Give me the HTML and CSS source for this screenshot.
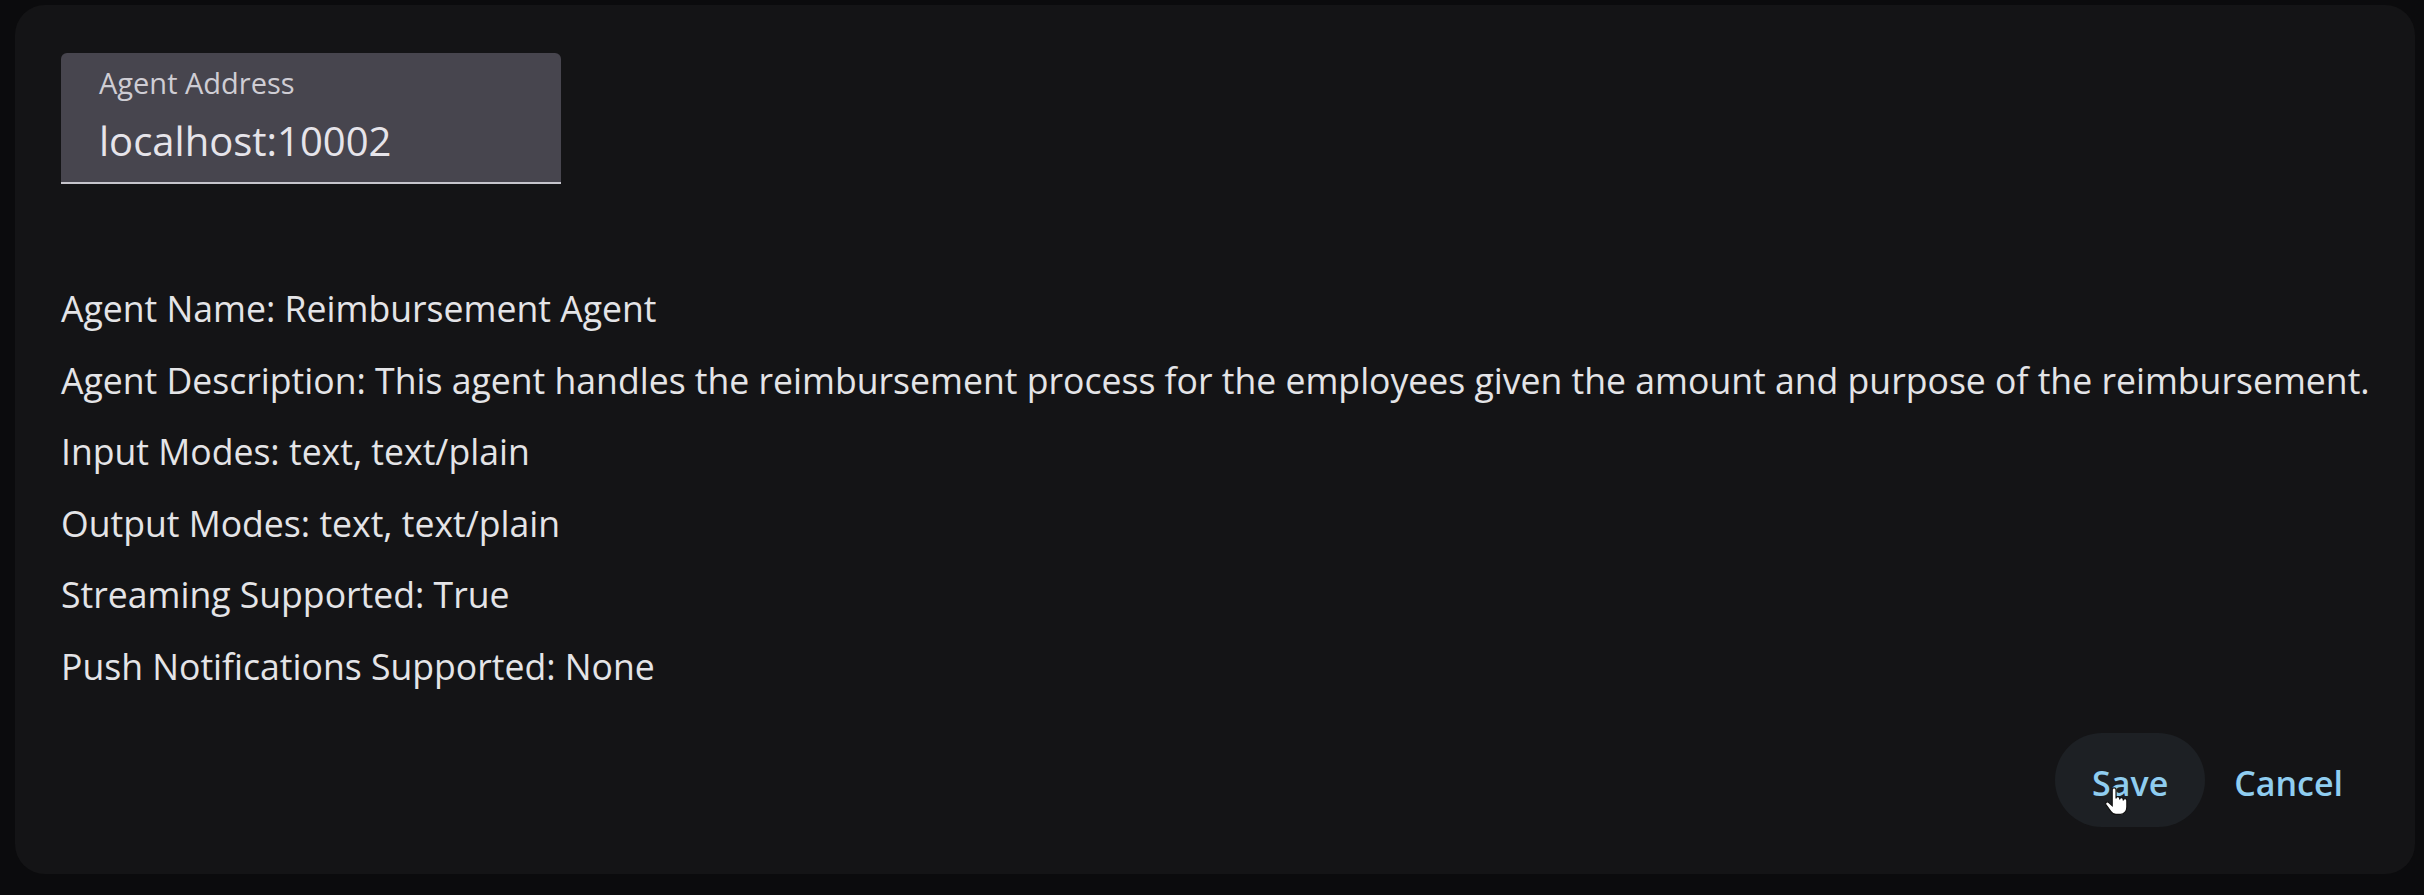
FILE: index.html
```html
<!DOCTYPE html>
<html lang="en">
<head>
<meta charset="utf-8">
<title>Agent</title>
<link rel="stylesheet" href="styles.css">
</head>
<body>
<div class="panel">
  <div class="field">
    <label class="field-label">Agent Address</label>
    <div class="field-value">localhost:10002</div>
  </div>
  <div class="info">
    <p>Agent Name: Reimbursement Agent</p>
    <p>Agent Description: This agent handles the reimbursement process for the employees given the amount and purpose of the reimbursement.</p>
    <p>Input Modes: text, text/plain</p>
    <p>Output Modes: text, text/plain</p>
    <p>Streaming Supported: True</p>
    <p>Push Notifications Supported: None</p>
  </div>
  <div class="actions">
    <button class="btn btn-hover">Save
      <svg class="cursor" viewBox="0 0 20 24" width="24" height="29"><path d="M6 2.2a1.6 1.6 0 0 1 3.2 0v7.3a1.5 1.5 0 0 1 3 0v.8a1.5 1.5 0 0 1 3 0v.9a1.5 1.5 0 0 1 3 0v5.3c0 3.3-2.2 6.3-5.3 6.3h-3.8c-2 0-3.2-1-4.3-2.6l-3.9-5.3a1.5 1.5 0 0 1 2.3-2l2.8 2.6z" fill="#fff" stroke="#111" stroke-width="1"/></svg>
    </button>
    <button class="btn">Cancel</button>
  </div>
</div>
</body>
</html>
```
FILE: styles.css
```css
html, body {
  margin: 0;
  padding: 0;
  background: #0b0b0d;
}
body {
  padding: 5px 9px 21px 15px;
  font-family: "Open Sans", "Noto Sans", sans-serif;
  color: #e4e4e7;
}
.panel {
  background: #141416;
  border-radius: 30px;
  height: 869px;
  box-sizing: border-box;
  padding: 48px 43px 47px 46px;
  display: flex;
  flex-direction: column;
}
.field {
  width: 500px;
  height: 131px;
  box-sizing: border-box;
  background: #47454e;
  border-radius: 6px 6px 0 0;
  border-bottom: 2px solid #c6c5cc;
  padding: 11px 38px 0 38px;
  display: flex;
  flex-direction: column;
}
.field-label {
  font-size: 29px;
  line-height: 38px;
  color: #cfcdd4;
}
.field-value {
  margin-top: 10px;
  font-size: 40px;
  line-height: 58px;
  color: #e6e4ea;
}
.info {
  margin-top: 89px;
}
.info p {
  margin: 0;
  font-size: 35.6px;
  line-height: 71.5px;
  white-space: nowrap;
}
.actions {
  margin-top: auto;
  display: flex;
  justify-content: flex-end;
}
.btn {
  position: relative;
  height: 94px;
  min-width: 150px;
  padding: 5px 29px 0;
  border: 0;
  border-radius: 47px;
  background: transparent;
  color: #8fcdf0;
  font-family: "Open Sans", "Noto Sans", sans-serif;
  font-weight: 600;
  font-size: 34px;
}
.btn-hover {
  background: #1d2024;
}
.cursor {
  position: absolute;
  left: 50px;
  top: 54px;
}
```
